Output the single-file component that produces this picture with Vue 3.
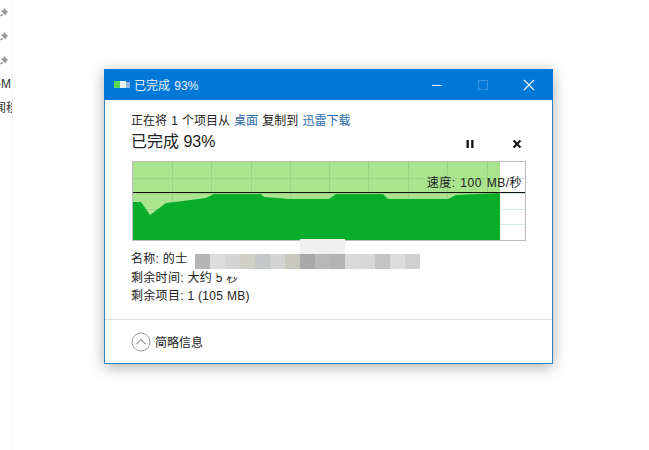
<script setup>
const hLines = [16, 31, 47, 62]
const vLines = [39, 78, 118, 157, 196, 235, 275, 314, 354]

// speed curve in chart coordinates (0,0 = inside top left corner of the graph)
const curve = [
  [0, 40], [8, 40], [17, 53], [25, 47], [33, 41], [50, 39], [73, 36], [81, 32],
  [128, 32], [131, 35], [156, 37], [163, 37], [196, 37], [203, 32],
  [250, 32], [255, 37], [315, 37], [323, 33], [367, 31],
]
const curvePath = 'M0 78 L' + curve.map((p) => p.join(' ')).join(' L') + ' L367 78 Z'

const mosaic = [
  '#b5b5b5', '#dcdcdc', '#d4d4d4', '#d0d0c8', '#c4c8c8', '#d4d4d4', '#c8c8c0', '#a8a8a8',
  '#b8b8b8', '#b4b4b4', '#dadada', '#d8d8d8', '#c4c4c4', '#dcdcdc', '#d0d0d0',
]
</script>

<template>
  <div class="desktop">
    <aside class="sidebar">
      <svg v-for="n in 3" :key="n" class="pin" width="9" height="10" viewBox="0 0 9 10">
        <path d="M5 0 L9 4 L7.5 5 L6.5 7.5 L2 3 L4.5 2 Z M3 5.5 L0 9 L4.5 7 Z" fill="#9a9a9a" />
      </svg>
      <span class="cut cut-first">-M</span>
      <span class="cut cut-second">闻移</span>
    </aside>

    <section class="window">
      <header class="titlebar">
        <svg class="app-icon" width="16" height="10" viewBox="0 0 16 10">
          <rect x="0" y="1" width="6" height="7" fill="#58d858" />
          <rect x="6" y="1" width="6" height="7" fill="#e8f0f4" />
          <rect x="12" y="2" width="4" height="6" fill="#8fb8e0" />
        </svg>
        <span class="title">已完成 93%</span>
        <div class="controls">
          <svg width="46" height="30" viewBox="0 0 46 30"><path d="M18 15.5 H28" stroke="#dcefff" stroke-width="1" /></svg>
          <svg width="46" height="30" viewBox="0 0 46 30"><rect x="18.5" y="10.5" width="9" height="9" fill="none" stroke="#3a96e2" /></svg>
          <svg width="46" height="30" viewBox="0 0 46 30"><path d="M18 10 L28 20 M28 10 L18 20" stroke="#eef7ff" stroke-width="1.1" /></svg>
        </div>
      </header>

      <div class="body">
        <p class="summary">正在将 1 个项目从 <a>桌面</a> 复制到 <a>迅雷下载</a></p>
        <div class="status">
          <span class="percent">已完成 93%</span>
          <div class="actions">
            <svg width="10" height="10" viewBox="0 0 10 10"><path d="M1.5 1 H3.8 V9 H1.5 Z M6.2 1 H8.5 V9 H6.2 Z" fill="#111" /></svg>
            <svg width="10" height="10" viewBox="0 0 10 10"><path d="M1.5 1.5 L8.5 8.5 M8.5 1.5 L1.5 8.5" stroke="#111" stroke-width="2" /></svg>
          </div>
        </div>

        <div class="graph">
          <svg width="392" height="78" viewBox="0 0 392 78">
            <g stroke="#d3ebe0">
              <line v-for="y in hLines" :key="y" x1="367" x2="392" :y1="y + 0.5" :y2="y + 0.5" />
            </g>
            <rect width="367" height="78" fill="#aae48e" />
            <g stroke="#9bd384">
              <line v-for="y in hLines" :key="y" x1="0" x2="367" :y1="y + 0.5" :y2="y + 0.5" />
              <line v-for="x in vLines" :key="x" :x1="x + 0.5" :x2="x + 0.5" y1="0" y2="78" />
            </g>
            <path :d="curvePath" fill="#08ae2a" />
            <line x1="0" x2="392" y1="30.5" y2="30.5" stroke="#111" />
          </svg>
          <span class="speed">速度: 100 MB/秒</span>
        </div>

        <div class="details">
          <p>名称: 的士</p>
          <p>剩余时间: 大约 5 秒</p>
          <p>剩余项目: 1 (105 MB)</p>
          <div class="mosaic">
            <i v-for="(c, i) in mosaic" :key="i" :style="{ background: c }"></i>
          </div>
          <div class="mosaic-pale"></div>
          <div class="mosaic-white"></div>
        </div>
      </div>

      <footer class="footer">
        <svg width="20" height="20" viewBox="0 0 20 20">
          <circle cx="10" cy="10" r="9" fill="none" stroke="#9c9c9c" stroke-width="1" />
          <path d="M5.5 12 L10 7.5 L14.5 12" fill="none" stroke="#9c9c9c" stroke-width="1.2" />
        </svg>
        <span>简略信息</span>
      </footer>
    </section>
  </div>
</template>

<style scoped>
.desktop {
  position: relative;
  width: 649px;
  height: 450px;
  overflow: hidden;
  background: #fff;
  font-family: "Liberation Sans", "Noto Sans CJK SC", sans-serif;
  color: #222;
}
.sidebar {
  position: absolute;
  left: 0;
  top: 0;
  bottom: 0;
  width: 12px;
  border-right: 1px solid #f2f2f2;
  overflow: hidden;
  padding-top: 8px;
  display: flex;
  flex-direction: column;
  gap: 14px;
  box-sizing: content-box;
}
.pin {
  margin-left: -1px;
  flex: none;
}
.cut {
  display: block;
  white-space: nowrap;
  font-size: 12px;
  line-height: 14px;
  color: #333;
}
.cut-first {
  margin-top: -3px;
  margin-left: -3px;
}
.cut-second {
  margin-top: -4px;
  margin-left: -6px;
}
.window {
  position: absolute;
  left: 104px;
  top: 69px;
  width: 449px;
  height: 295px;
  box-sizing: border-box;
  display: flex;
  flex-direction: column;
  background: #fff;
  border: 1px solid #2a86c8;
  border-top: 0;
  box-shadow: 0 3px 14px rgba(0, 0, 0, 0.32);
}
.titlebar {
  height: 31px;
  flex: none;
  margin: 0 -1px;
  padding-left: 10px;
  display: flex;
  align-items: center;
  background: #0078d7;
  color: #fff;
}
.app-icon {
  margin-right: 4px;
}
.title {
  font-size: 12px;
  word-spacing: 1px;
  color: #e8f3fc;
}
.controls {
  margin-left: auto;
  display: flex;
  gap: 0;
  padding-right: 1px;
}
.body {
  flex: 1;
  padding: 13px 26px 0 26px;
}
.summary {
  margin: 0;
  font-size: 12px;
  line-height: 17px;
  word-spacing: 0.8px;
  white-space: nowrap;
}
.summary a {
  color: #1f6aa8;
}
.status {
  height: 24px;
  margin-top: 2px;
  display: flex;
  align-items: center;
}
.percent {
  font-size: 16px;
  line-height: 20px;
  margin-bottom: 4px;
  color: #222;
}
.actions {
  margin-left: auto;
  margin-right: 4px;
  display: flex;
  gap: 37px;
}
.graph {
  position: relative;
  width: 394px;
  height: 80px;
  margin-top: 5px;
  margin-left: 1px;
  box-sizing: border-box;
  border: 1px solid #bcbcbc;
}
.graph svg {
  display: block;
}
.speed {
  position: absolute;
  right: 3px;
  top: 13px;
  font-size: 12px;
  line-height: 16px;
  letter-spacing: 0.5px;
  word-spacing: 1px;
  color: #222;
  white-space: nowrap;
}
.details {
  position: relative;
  margin-top: 9px;
  font-size: 12px;
  line-height: 18.5px;
  letter-spacing: 0.3px;
}
.details p {
  margin: 0;
  white-space: nowrap;
}
.mosaic {
  position: absolute;
  left: 64px;
  top: 4px;
  display: flex;
  height: 15px;
}
.mosaic i {
  display: block;
  width: 15px;
  height: 15px;
  filter: blur(0.5px);
}
.mosaic-pale {
  position: absolute;
  left: 169px;
  top: -11px;
  width: 45px;
  height: 15px;
  background: #f0f0f0;
}
.mosaic-white {
  position: absolute;
  left: 85px;
  top: 19px;
  width: 204px;
  height: 18px;
  background: #fff;
  clip-path: polygon(0 0, 100% 0, 100% 100%, 24px 100%, 24px 8px, 2px 7px);
}
.footer {
  flex: none;
  height: 43px;
  padding-left: 26px;
  border-top: 1px solid #dfdfdf;
  display: flex;
  align-items: center;
  gap: 4px;
  font-size: 12px;
  color: #222;
}
</style>
